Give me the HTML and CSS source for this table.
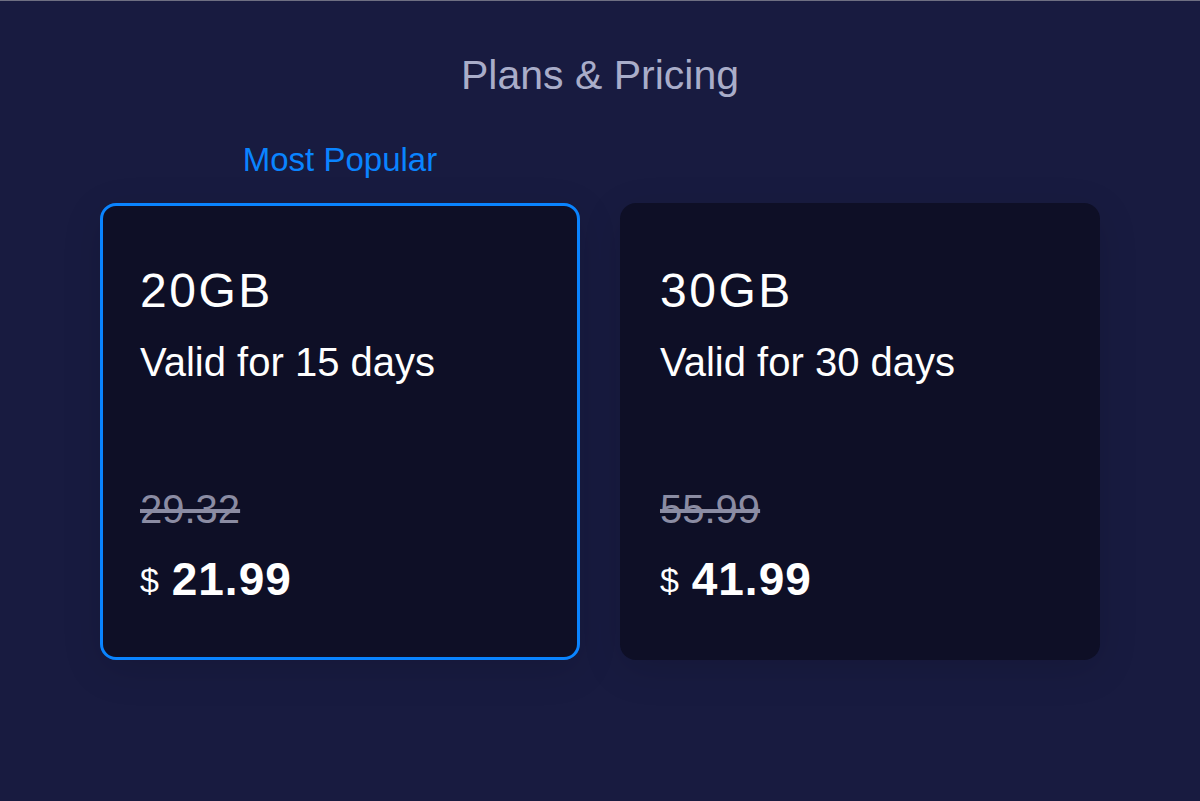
FILE: index.html
```html
<!DOCTYPE html>
<html lang="en">
<head>
    <meta charset="UTF-8">
    <meta name="viewport" content="width=device-width, initial-scale=1.0">
    <title>Plans &amp; Pricing</title>
    <link rel="stylesheet" href="styles.css">
</head>
<body>
    <div class="page">
        <h1 class="title">Plans &amp; Pricing</h1>

        <div class="plans">
            <div class="badge">Most Popular</div>
            <div class="badge-spacer"></div>

            <div class="plan plan-popular">
                <div class="plan-data">20GB</div>
                <div class="plan-validity">Valid for 15 days</div>
                <div class="plan-old-price">29.32</div>
                <div class="plan-price"><span class="currency">$</span> <span class="amount">21.99</span></div>
            </div>

            <div class="plan">
                <div class="plan-data">30GB</div>
                <div class="plan-validity">Valid for 30 days</div>
                <div class="plan-old-price">55.99</div>
                <div class="plan-price"><span class="currency">$</span> <span class="amount">41.99</span></div>
            </div>
        </div>
    </div>
</body>
</html>
```

FILE: styles.css
```css
html, body {
    height: 100%;
}
body {
    margin: 0;
    background-color: #181b40;
    border-top: 1px solid #6e6f82;
    box-sizing: border-box;
    font-family: "Liberation Sans", Arial, sans-serif;
    color: #ffffff;
}
.page {
    padding-top: 50px;
}
.title {
    margin: 0;
    font-size: 41px;
    font-weight: 400;
    line-height: 48px;
    text-align: center;
    color: #a9adc9;
}
.plans {
    display: grid;
    grid-template-columns: 480px 480px;
    column-gap: 40px;
    justify-content: center;
    margin-top: 42px;
}
.badge {
    font-size: 33px;
    line-height: 38px;
    text-align: center;
    color: #0a84ff;
    margin-bottom: 24px;
}
.plan {
    box-sizing: border-box;
    padding: 59px 37px 51px;
    border: 3px solid transparent;
    border-radius: 16px;
    background-color: #0e0f26;
    box-shadow: 0 10px 40px rgba(0, 0, 0, 0.12);
}
.plan-popular {
    border-color: #0a84ff;
}
.plan-data {
    font-size: 48px;
    line-height: 52px;
    letter-spacing: 2.5px;
}
.plan-validity {
    margin-top: 20px;
    font-size: 40px;
    line-height: 50px;
}
.plan-old-price {
    margin-top: 99px;
    font-size: 40px;
    line-height: 46px;
    color: #8b8ca3;
    text-decoration: line-through;
}
.plan-price {
    margin-top: 21px;
    font-size: 46px;
    line-height: 52px;
}
.currency {
    font-size: 34px;
    vertical-align: 3px;
}
.amount {
    font-weight: bold;
    letter-spacing: 1px;
}
```
